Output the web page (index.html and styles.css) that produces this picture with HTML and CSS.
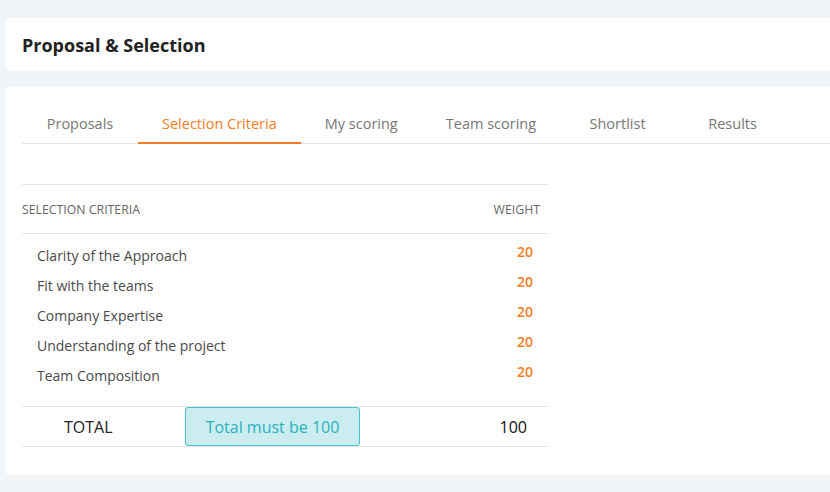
FILE: index.html
```html
<!DOCTYPE html>
<html lang="en">
<head>
  <meta charset="UTF-8">
  <title>Proposal &amp; Selection</title>
  <link rel="stylesheet" href="styles.css">
</head>
<body>
<main class="page">
  <header class="card title-card">
    <h1>Proposal &amp; Selection</h1>
  </header>

  <section class="card content-card">
    <nav class="tabs">
      <a class="tab">Proposals</a>
      <a class="tab active">Selection Criteria</a>
      <a class="tab">My scoring</a>
      <a class="tab">Team scoring</a>
      <a class="tab">Shortlist</a>
      <a class="tab">Results</a>
    </nav>

    <div class="criteria">
      <div class="criteria-head">
        <span>Selection Criteria</span>
        <span>Weight</span>
      </div>

      <ul class="criteria-list">
        <li><span>Clarity of the Approach</span><b>20</b></li>
        <li><span>Fit with the teams</span><b>20</b></li>
        <li><span>Company Expertise</span><b>20</b></li>
        <li><span>Understanding of the project</span><b>20</b></li>
        <li><span>Team Composition</span><b>20</b></li>
      </ul>

      <div class="criteria-total">
        <span class="total-label">TOTAL</span>
        <span class="total-note">Total must be 100</span>
        <span class="total-value">100</span>
      </div>
    </div>
  </section>
</main>
</body>
</html>
```

FILE: styles.css
```css
body {
  margin: 0;
  background: #f1f5f8;
  font-family: "Open Sans", sans-serif;
  overflow: hidden;
}

.page {
  padding: 18px 0 0 6px;
}

.card {
  background: #fff;
  border-radius: 4px;
  margin-right: -10px;
}

.title-card {
  height: 53px;
  display: flex;
  align-items: center;
  padding: 0 16px;
}

.title-card h1 {
  margin: 0;
  font-size: 18px;
  font-weight: 700;
  color: #222;
}

.content-card {
  margin-top: 16px;
  padding: 18px 0 28px 16px;
}

.tabs {
  display: flex;
  border-bottom: 1px solid #e3e3e3;
}

.tab {
  min-width: 115px;
  box-sizing: border-box;
  padding: 0 24px;
  height: 39px;
  line-height: 38px;
  text-align: center;
  font-size: 14.5px;
  color: #777;
  margin-bottom: -1px;
  cursor: pointer;
}

.tab:first-child {
  min-width: 116px;
}

.tab.active {
  color: #f57c1f;
  border-bottom: 2px solid #f57c1f;
}

.criteria {
  width: 527px;
  margin-top: 40px;
  border-top: 1px solid #e6e6e6;
}

.criteria-head {
  display: flex;
  justify-content: space-between;
  align-items: center;
  height: 48px;
  padding-right: 9px;
  border-bottom: 1px solid #e6e6e6;
  font-size: 12.3px;
  text-transform: uppercase;
  color: #666;
}

.criteria-list {
  list-style: none;
  margin: 0;
  padding: 6px 16px 16px 15px;
}

.criteria-list li {
  display: flex;
  justify-content: space-between;
  align-items: center;
  height: 30px;
  font-size: 14px;
  color: #4a4a4a;
}

.criteria-list b {
  color: #f57c1f;
  font-weight: 600;
  padding-bottom: 8px;
}

.criteria-total {
  display: flex;
  align-items: center;
  height: 39px;
  border-top: 1px solid #e6e6e6;
  border-bottom: 1px solid #e6e6e6;
}

.total-label {
  width: 163px;
  box-sizing: border-box;
  padding-left: 42px;
  font-size: 16px;
  color: #222;
}

.total-note {
  width: 175px;
  height: 39px;
  box-sizing: border-box;
  display: flex;
  align-items: center;
  justify-content: center;
  background: #cbedf0;
  border: 1px solid #45c0cc;
  border-radius: 3px;
  font-size: 16px;
  color: #2bb0bf;
}

.total-value {
  margin-left: auto;
  padding-right: 22px;
  font-size: 16px;
  color: #111;
}
```
